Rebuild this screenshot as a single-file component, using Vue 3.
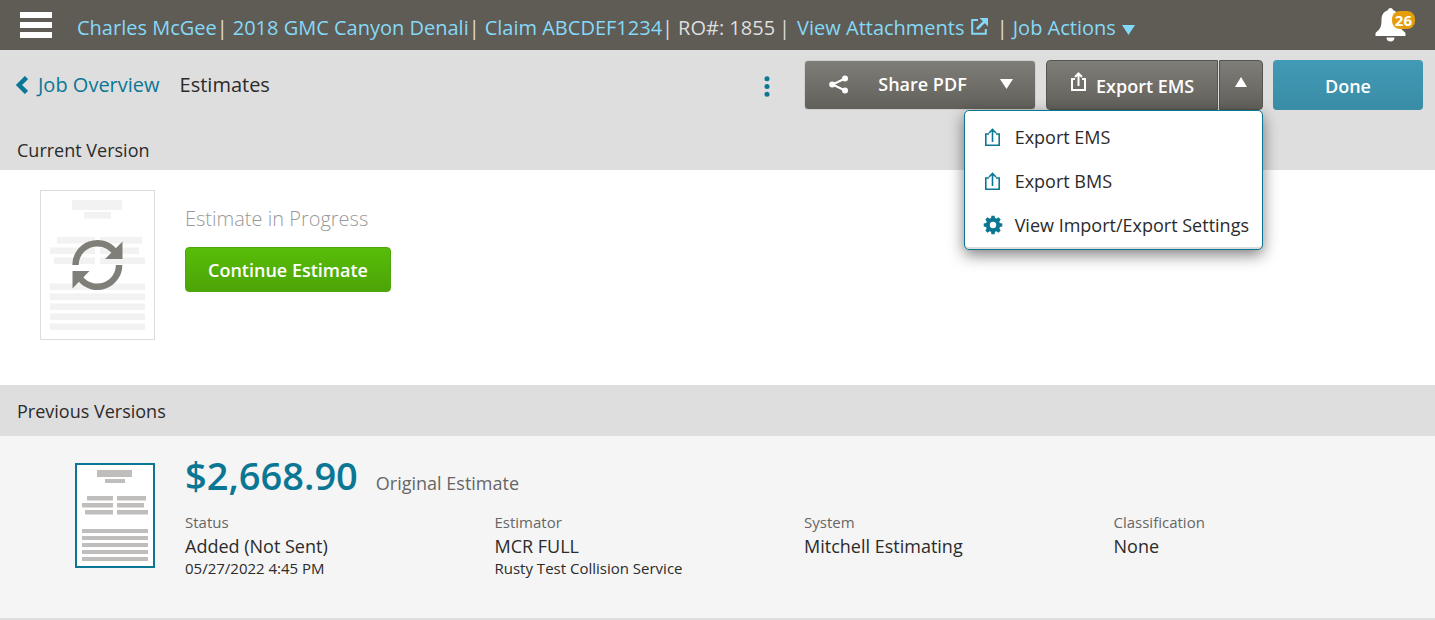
<script setup>
import { ref } from 'vue'

const menuOpen = ref(true)

const details = [
  { label: 'Status', value: 'Added (Not Sent)', note: '05/27/2022 4:45 PM' },
  { label: 'Estimator', value: 'MCR FULL', note: 'Rusty Test Collision Service' },
  { label: 'System', value: 'Mitchell Estimating', note: '' },
  { label: 'Classification', value: 'None', note: '' }
]
</script>

<template>
  <div class="page">
    <header class="topbar">
      <button class="burger" type="button" aria-label="Menu">
        <svg width="32" height="26" viewBox="0 0 32 26" fill="#fff">
          <path d="M0 0h32v6H0zM0 10h32v6H0zM0 20h32v6H0z" />
        </svg>
      </button>
      <nav class="job">
        <a href="#">Charles McGee</a><span class="bar">|</span>
        <a href="#">2018 GMC Canyon Denali</a><span class="bar">|</span>
        <a href="#">Claim ABCDEF1234</a><span class="bar">|</span>
        <span>RO#: 1855</span>
        <span class="bar wide">|</span>
        <a href="#">View Attachments
          <svg class="ext" width="17" height="17" viewBox="0 0 17 17" fill="none" stroke="currentColor" stroke-width="2">
            <path d="M7 2H1.200v13.800h13.600V11" />
            <path d="M6 11l7.500-7.500" stroke-width="2.600" />
            <path d="M8.500 0H17v8.500z" fill="currentColor" stroke="none" />
          </svg></a>
        <span class="bar last">|</span>
        <button class="actions" type="button">Job Actions
          <svg width="13" height="10" viewBox="0 0 13 10" fill="currentColor"><path d="M0 0h13L6.500 10z" /></svg>
        </button>
      </nav>
      <button class="bell" type="button" aria-label="Notifications">
        <svg width="31" height="34" viewBox="0 0 31 34" fill="#fff">
          <path d="M15.500 0c1.500 0 2.500 1 2.500 2.200 4.500 1.300 6.500 4.800 6.500 9.800 0 7 1.500 9 4.500 11.500 1.300 1 1.500 1.500 1.500 3V28H.5v-1.500c0-1.500.2-2 1.500-3C5 21 6.500 19 6.500 12c0-5 2-8.500 6.500-9.800C13 1 14 0 15.500 0zM11.500 29.500h8c0 2.500-1.800 4-4 4s-4-1.500-4-4z" />
        </svg>
        <span class="badge">26</span>
      </button>
    </header>

    <section class="toolbar">
      <div class="crumbs">
        <a class="back" href="#">
          <svg width="13" height="18" viewBox="0 0 13 18" fill="none" stroke="currentColor" stroke-width="4.500">
            <path d="M11.500 1.500L4 9l7.500 7.500" />
          </svg>Job Overview</a>
        <h1>Estimates</h1>
      </div>
      <div class="tools">
        <button class="more" type="button" aria-label="More">
          <svg width="6" height="21" viewBox="0 0 6 21" fill="currentColor">
            <circle cx="3" cy="2.700" r="2.500" /><circle cx="3" cy="10.500" r="2.500" /><circle cx="3" cy="18.300" r="2.500" />
          </svg>
        </button>
        <button class="btn share" type="button">
          <svg width="20" height="19" viewBox="0 0 20 19" fill="#fff">
            <circle cx="3.200" cy="9.500" r="3" /><circle cx="16" cy="3.500" r="3" /><circle cx="16" cy="15.500" r="3" />
            <path d="M16 3.500L3.500 9.500l12.500 6" fill="none" stroke="#fff" stroke-width="2" />
          </svg>
          <span>Share PDF</span>
          <svg width="13" height="10" viewBox="0 0 13 10" fill="#fff"><path d="M0 0h13L6.500 10z" /></svg>
        </button>
        <div class="split">
          <button class="btn export" type="button">
            <svg width="18" height="19" viewBox="0 0 18 19" fill="none" stroke="#fff" stroke-width="2">
              <path d="M5 7H2v11h13V7h-3M8.500 14V2M5 5l3.500-3.500L12 5" />
            </svg>
            <span>Export EMS</span>
          </button>
          <button class="btn toggle" type="button" aria-label="Export options" :aria-expanded="menuOpen" @click="menuOpen = !menuOpen">
            <svg width="12" height="10" viewBox="0 0 12 10" fill="#fff"><path d="M0 10h12L6 0z" /></svg>
          </button>
          <ul v-if="menuOpen" class="menu">
            <li v-for="name in ['Export EMS', 'Export BMS']" :key="name">
              <button type="button">
                <svg width="18" height="19" viewBox="0 0 18 19" fill="none" stroke="currentColor" stroke-width="1.600">
                  <path d="M5 6H1.800v11.200h13.400V6H12M8.500 14V2M5 5l3.500-3.500L12 5" />
                </svg>
                <span>{{ name }}</span>
              </button>
            </li>
            <li>
              <button type="button">
                <svg width="20" height="20" viewBox="-10 -10 20 20" fill="currentColor">
                  <g v-for="n in 8" :key="n" :transform="`rotate(${n * 45})`">
                    <path d="M-2.200-5.500L-1.600-9.300h3.200l.6 3.800z" />
                  </g>
                  <circle r="5.200" fill="none" stroke="currentColor" stroke-width="4" />
                </svg>
                <span>View Import/Export Settings</span>
              </button>
            </li>
          </ul>
        </div>
        <button class="btn done" type="button">Done</button>
      </div>
    </section>

    <h2 class="heading current">Current Version</h2>
    <section class="progress">
      <svg class="doc" width="115" height="150" viewBox="0 0 115 150">
        <rect x=".5" y=".5" width="114" height="149" fill="#fff" stroke="#dcdcdc" />
        <path fill="#f2f2f2" d="M32 10h50v10H32zM44 22h27v6.500H44zM17 47h38v6.500H17zM60 47h42v6.500H60zM10 57.500h45V64H10zM60 57.500h39V64H60zM14 67.500h41V74H14zM60 67.500h45V74H60zM10 93.500h95v6.500H10zM10 103.500h95v6.500H10zM10 113.500h95v6.500H10zM10 123.500h95v6.500H10zM10 133.500h95v6.500H10z" />
        <g fill="none" stroke="#7f7e79" stroke-width="6.500">
          <path d="M35.500 75A21.800 21.800 0 0 1 74 61" />
          <path d="M79.100 75A21.800 21.800 0 0 1 40.600 89" />
        </g>
        <path fill="#7f7e79" d="M82.500 51.500V69H65zM32.500 98.500V81H49.500z" />
      </svg>
      <div>
        <p class="state">Estimate in Progress</p>
        <button class="btn continue" type="button">Continue Estimate</button>
      </div>
    </section>

    <h2 class="heading previous">Previous Versions</h2>
    <section class="version">
      <svg class="thumb" width="80" height="105" viewBox="0 0 80 105">
        <rect x="1" y="1" width="78" height="103" fill="#fff" stroke="#0b7794" stroke-width="2" />
        <path fill="#bfbebc" d="M22 7h35v7H22zM30 16h20v4H30zM12 33h26v4.500H12zM42 33h29v4.500H42zM7 40h31v4.500H7zM42 40h27v4.500H42zM10 47h28v4.500H10zM42 47h31v4.500H42zM7 66h66v4H7zM7 73h66v4H7zM7 80h66v4H7zM7 87h66v4H7zM7 94h66v4H7z" />
      </svg>
      <div class="info">
        <div class="total"><a href="#">$2,668.90</a><span>Original Estimate</span></div>
        <dl class="details">
          <div v-for="d in details" :key="d.label">
            <dt>{{ d.label }}</dt>
            <dd>{{ d.value }}</dd>
            <dd v-if="d.note" class="note">{{ d.note }}</dd>
          </div>
        </dl>
      </div>
    </section>
  </div>
</template>

<style>
body { margin: 0; background: #fff; }
</style>

<style scoped>
.page {
  font-family: "Open Sans", "Noto Sans", sans-serif;
  font-size: 18px;
  line-height: 24px;
  color: #2b2b2b;
}
* { box-sizing: border-box; }
a { text-decoration: none; }
button {
  font: inherit;
  color: inherit;
  border: 0;
  padding: 0;
  background: none;
  cursor: pointer;
}
svg { display: block; flex: none; }
h1, h2, p, ul, dl, dd { margin: 0; padding: 0; font-weight: 400; }

.topbar {
  display: flex;
  align-items: center;
  height: 50px;
  padding: 0 20px;
  background: #5f5b55;
}
.job {
  flex: 1;
  margin-left: 25px;
  padding-top: 5px;
  font-size: 20px;
  line-height: 28px;
  color: #dedede;
  white-space: nowrap;
}
.job a, .actions { color: #85d9f8; }
.job svg { display: inline-block; margin-left: 1px; }
.bar { margin-right: 5px; }
.bar.wide { margin: 0 7px 0 4px; }
.bar.last { margin-left: 9px; }
.bell { position: relative; }
.bell svg { margin-right: 9px; }
.badge {
  position: absolute;
  top: 3px;
  right: 0;
  padding: 0 3px;
  border-radius: 8px;
  background: #e69d0b;
  color: #fff;
  font-size: 15px;
  font-weight: 700;
  line-height: 18px;
}

.toolbar {
  display: flex;
  justify-content: space-between;
  height: 80px;
  padding: 10px 12px 0 15px;
  background: #dedede;
}
.crumbs {
  display: flex;
  align-items: center;
  gap: 20px;
  height: 50px;
  font-size: 20px;
}
.back { display: flex; align-items: center; gap: 10px; color: #0b7794; }
.crumbs h1 { font-size: 20px; }
.tools { display: flex; align-items: flex-start; }
.more { height: 52px; margin-right: 34px; color: #0b7794; }
.btn {
  display: flex;
  align-items: center;
  height: 50px;
  border-radius: 4px;
  color: #fff;
  font-weight: 600;
  white-space: nowrap;
}
.share, .export, .toggle { background: linear-gradient(#7f7d78, #62605a); }
.share {
  width: 232px;
  padding: 0 22px 2px 24px;
  margin-right: 10px;
  border: 1px solid #cfcfcf;
}
.share span { flex: 1; padding-right: 4px; }
.split { position: relative; display: flex; gap: 1px; margin-right: 10px; }
.export {
  gap: 8px;
  width: 172px;
  padding: 0 23px;
  border: 1px solid #56544f;
  border-radius: 4px 0 0 4px;
}
.export svg { margin-bottom: 8px; }
.export span { padding-top: 1px; }
.toggle {
  justify-content: center;
  width: 44px;
  padding-bottom: 6px;
  border: 1px solid #56544f;
  border-radius: 0 4px 4px 0;
}
.done {
  justify-content: center;
  width: 150px;
  padding-top: 1px;
  background: linear-gradient(#419ab6, #3a8ca5);
}
.menu {
  position: absolute;
  z-index: 2;
  top: 100%;
  right: 0;
  padding: 5px 0 1px;
  border: 1px solid #0b7794;
  border-radius: 5px;
  background: #fff;
  box-shadow: inset 0 -2px 0 #dedede, 0 5px 15px rgba(0, 0, 0, 0.5);
  list-style: none;
}
.menu button {
  display: flex;
  align-items: center;
  gap: 12px;
  width: 100%;
  height: 44px;
  padding: 0 13px 2px 18px;
  white-space: nowrap;
}
.menu svg { width: 20px; color: #0b7794; }

.heading { padding: 0 17px; background: #dedede; font-size: 18px; }
.current { padding-top: 8px; padding-bottom: 8px; }
.previous { padding-top: 14px; padding-bottom: 13px; }
.progress {
  display: flex;
  gap: 30px;
  min-height: 215px;
  padding: 20px 40px;
}
.state { margin: 16px 0; color: #999; font-size: 20px; font-weight: 300; line-height: 25px; }
.continue {
  height: 45px;
  padding: 0 22px;
  border: 1px solid #4ea60b;
  background: linear-gradient(#58bd09, #4ca407);
}

.version {
  display: flex;
  gap: 30px;
  min-height: 184px;
  padding: 17px 12px 0 75px;
  border-bottom: 2px solid #dedede;
  background: #f5f5f5;
}
.thumb { margin-top: 10px; }
.info { flex: 1; }
.total { display: flex; align-items: baseline; gap: 18px; color: #666; line-height: 44px; }
.total a { color: #0b7794; font-size: 38px; font-weight: 600; }
.details { display: grid; grid-template-columns: repeat(4, 1fr); margin-top: 6px; }
.details dt { color: #666; font-size: 15px; line-height: 22px; }
.details dd { line-height: 26px; }
.details .note { font-size: 15px; line-height: 18px; }
</style>
